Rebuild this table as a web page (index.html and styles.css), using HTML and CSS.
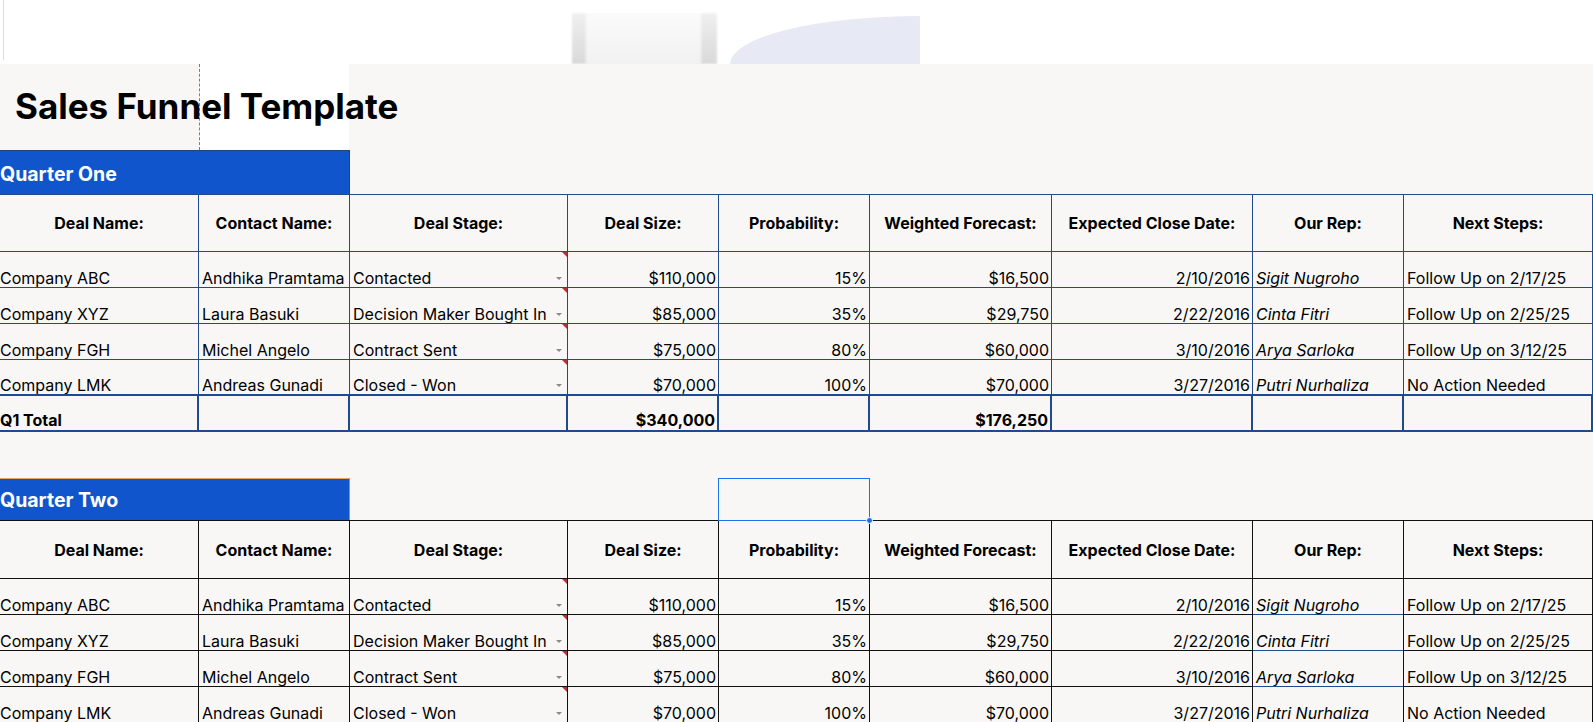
FILE: index.html
```html
<!DOCTYPE html>
<html lang="en">
<head>
<meta charset="utf-8">
<title>Sales Funnel Template</title>
<link rel="stylesheet" href="styles.css">
</head>
<body>
<div class="topband">
  <div class="vline"></div>
  <div class="bar bar1"></div>
  <div class="wash"></div>
  <div class="bar bar2"></div>
  <div class="arc"></div>
</div>
<main class="sheet">
  <div class="title-row">
    <div class="tcell tcell-a"><h1 class="title">Sales Funnel Template</h1></div>
    <div class="tcell tcell-b"></div>
    <div class="tcell"></div>
  </div>

  <section class="quarter q1">
    <div class="qbar-row"><div class="qbar">Quarter One</div></div>
    <div class="grid">
      <div class="c hd">Deal Name:</div>
      <div class="c hd">Contact Name:</div>
      <div class="c hd">Deal Stage:</div>
      <div class="c hd">Deal Size:</div>
      <div class="c hd">Probability:</div>
      <div class="c hd">Weighted Forecast:</div>
      <div class="c hd">Expected Close Date:</div>
      <div class="c hd">Our Rep:</div>
      <div class="c hd">Next Steps:</div>

      <div class="c first">Company ABC</div>
      <div class="c">Andhika Pramtama</div>
      <div class="c stage">Contacted<span class="flag"></span><span class="caret"></span></div>
      <div class="c num">$110,000</div>
      <div class="c num">15%</div>
      <div class="c num">$16,500</div>
      <div class="c num">2/10/2016</div>
      <div class="c it">Sigit Nugroho</div>
      <div class="c">Follow Up on 2/17/25</div>

      <div class="c first">Company XYZ</div>
      <div class="c">Laura Basuki</div>
      <div class="c stage">Decision Maker Bought In<span class="flag"></span><span class="caret"></span></div>
      <div class="c num">$85,000</div>
      <div class="c num">35%</div>
      <div class="c num">$29,750</div>
      <div class="c num">2/22/2016</div>
      <div class="c it">Cinta Fitri</div>
      <div class="c">Follow Up on 2/25/25</div>

      <div class="c first">Company FGH</div>
      <div class="c">Michel Angelo</div>
      <div class="c stage">Contract Sent<span class="flag"></span><span class="caret"></span></div>
      <div class="c num">$75,000</div>
      <div class="c num">80%</div>
      <div class="c num">$60,000</div>
      <div class="c num">3/10/2016</div>
      <div class="c it">Arya Sarloka</div>
      <div class="c">Follow Up on 3/12/25</div>

      <div class="c first lastrow">Company LMK</div>
      <div class="c lastrow">Andreas Gunadi</div>
      <div class="c stage lastrow">Closed - Won<span class="flag"></span><span class="caret"></span></div>
      <div class="c num lastrow">$70,000</div>
      <div class="c num lastrow">100%</div>
      <div class="c num lastrow">$70,000</div>
      <div class="c num lastrow">3/27/2016</div>
      <div class="c it lastrow">Putri Nurhaliza</div>
      <div class="c lastrow">No Action Needed</div>

      <div class="c first tot">Q1 Total</div>
      <div class="c tot"></div>
      <div class="c tot"></div>
      <div class="c num tot">$340,000</div>
      <div class="c tot"></div>
      <div class="c num tot">$176,250</div>
      <div class="c tot"></div>
      <div class="c tot"></div>
      <div class="c tot"></div>
    </div>
  </section>

  <div class="gap"></div>

  <section class="quarter q2">
    <div class="qbar-row qbar-row2">
      <div class="qbar qbar2">Quarter Two</div>
      <div class="sel"><span class="handle"></span></div>
    </div>
    <div class="grid grid2">
      <div class="c hd">Deal Name:</div>
      <div class="c hd">Contact Name:</div>
      <div class="c hd">Deal Stage:</div>
      <div class="c hd">Deal Size:</div>
      <div class="c hd">Probability:</div>
      <div class="c hd">Weighted Forecast:</div>
      <div class="c hd">Expected Close Date:</div>
      <div class="c hd">Our Rep:</div>
      <div class="c hd">Next Steps:</div>

      <div class="c first">Company ABC</div>
      <div class="c">Andhika Pramtama</div>
      <div class="c stage">Contacted<span class="flag"></span><span class="caret"></span></div>
      <div class="c num">$110,000</div>
      <div class="c num">15%</div>
      <div class="c num">$16,500</div>
      <div class="c num">2/10/2016</div>
      <div class="c it rep">Sigit Nugroho</div>
      <div class="c">Follow Up on 2/17/25</div>

      <div class="c first">Company XYZ</div>
      <div class="c">Laura Basuki</div>
      <div class="c stage">Decision Maker Bought In<span class="flag"></span><span class="caret"></span></div>
      <div class="c num">$85,000</div>
      <div class="c num">35%</div>
      <div class="c num">$29,750</div>
      <div class="c num">2/22/2016</div>
      <div class="c it rep">Cinta Fitri</div>
      <div class="c">Follow Up on 2/25/25</div>

      <div class="c first">Company FGH</div>
      <div class="c">Michel Angelo</div>
      <div class="c stage">Contract Sent<span class="flag"></span><span class="caret"></span></div>
      <div class="c num">$75,000</div>
      <div class="c num">80%</div>
      <div class="c num">$60,000</div>
      <div class="c num">3/10/2016</div>
      <div class="c it rep">Arya Sarloka</div>
      <div class="c">Follow Up on 3/12/25</div>

      <div class="c first">Company LMK</div>
      <div class="c">Andreas Gunadi</div>
      <div class="c stage">Closed - Won<span class="flag"></span><span class="caret"></span></div>
      <div class="c num">$70,000</div>
      <div class="c num">100%</div>
      <div class="c num">$70,000</div>
      <div class="c num">3/27/2016</div>
      <div class="c it">Putri Nurhaliza</div>
      <div class="c">No Action Needed</div>
    </div>
  </section>
</main>
</body>
</html>
```

FILE: styles.css
```css
* { box-sizing: border-box; }

html, body {
  margin: 0;
  padding: 0;
}

body {
  width: 1593px;
  height: 722px;
  overflow: hidden;
  background: #f8f7f6;
  font-family: Inter, "Liberation Sans", sans-serif;
  color: #000;
}

/* top decorative band */
.topband {
  height: 64px;
  background: #fff;
  display: flex;
  align-items: flex-start;
  overflow: hidden;
}
.vline {
  margin-left: 3px;
  width: 1px;
  height: 60px;
  background: #dcdcdc;
}
.bar {
  margin-top: 13px;
  height: 51px;
  background: linear-gradient(#f0f0f0, #d9d9d9);
  filter: blur(1px);
}
.bar1 { margin-left: 568px; width: 14px; }
.wash {
  margin-top: 13px;
  width: 115px;
  height: 51px;
  background: linear-gradient(#fbfbfb, #f1f1f1);
}
.bar2 { width: 16px; }
.arc {
  margin-left: 13px;
  margin-top: 16px;
  width: 190px;
  height: 48px;
  background: #e7eaf5;
  border-top-left-radius: 190px 48px;
}

/* title row */
.title-row {
  display: grid;
  grid-template-columns: 200px 149px 1fr;
  height: 86px;
}
.tcell-a {
  border-right: 1px dashed #4a86d8;
}
.tcell-b {
  background: #fff;
}
.title {
  position: relative;
  z-index: 1;
  margin: 0;
  padding: 21px 0 0 15px;
  font-size: 35px;
  line-height: 42px;
  font-weight: 700;
  white-space: nowrap;
}

/* quarter sections */
.q1 { --line: #1f4b8e; }
.q2 { --line: #111; }

.qbar-row {
  display: grid;
  grid-template-columns: 199px 151px 218px 151px 151px 182px 201px 151px 189px;
  height: 44px;
}
.qbar-row2 { height: 42px; }

.qbar {
  grid-column: 1 / span 2;
  background: #1155cc;
  border-top: 1px solid #1c4587;
  border-right: 1px solid #1c4587;
  color: #fff;
  font-weight: 700;
  font-size: 19.5px;
  line-height: 22px;
  display: flex;
  align-items: flex-end;
  padding-bottom: 9px;
  white-space: nowrap;
}
.qbar2 {
  border-top-color: #e8a35e;
  border-right-color: #b9865a;
}

.sel {
  grid-column: 5;
  margin-left: -1px;
  margin-bottom: -1px;
  border: 1px solid #1a73e8;
  position: relative;
  z-index: 2;
}
.handle {
  position: absolute;
  right: -4px;
  bottom: -4px;
  width: 7px;
  height: 7px;
  border-radius: 50%;
  background: #1a73e8;
  border: 1px solid #fff;
}

.grid {
  display: grid;
  grid-template-columns: 199px 151px 218px 151px 151px 182px 201px 151px 189px;
  grid-template-rows: 57px repeat(5, 36px);
  border-top: 1px solid var(--line);
}
.grid2 {
  grid-template-rows: 58px repeat(4, 36px);
}

.c {
  position: relative;
  border-right: 1px solid var(--line);
  border-bottom: 1px solid var(--line);
  font-size: 16px;
  line-height: 18px;
  padding: 0 3px;
  display: flex;
  align-items: flex-end;
  white-space: nowrap;
  overflow: hidden;
}
.hd {
  font-weight: 700;
  align-items: center;
  justify-content: center;
  line-height: 20px;
}
.first { padding-left: 0; }
.num { justify-content: flex-end; padding-right: 2px; }
.it { font-style: italic; }
.rep { border-bottom-color: #1f4b8e; }

.lastrow { border-bottom-width: 2px; }
.tot {
  border-right-width: 2px;
  border-bottom-width: 2px;
  font-weight: 700;
  padding-bottom: 1px;
}

.flag {
  position: absolute;
  top: 0;
  right: 0;
  width: 0;
  height: 0;
  border-left: 5px solid transparent;
  border-top: 5px solid #b3343a;
}
.caret {
  position: absolute;
  right: 5px;
  bottom: 7px;
  width: 0;
  height: 0;
  border-left: 3px solid transparent;
  border-right: 3px solid transparent;
  border-top: 3px solid #8a8a8a;
}

.gap { height: 46px; }
```
